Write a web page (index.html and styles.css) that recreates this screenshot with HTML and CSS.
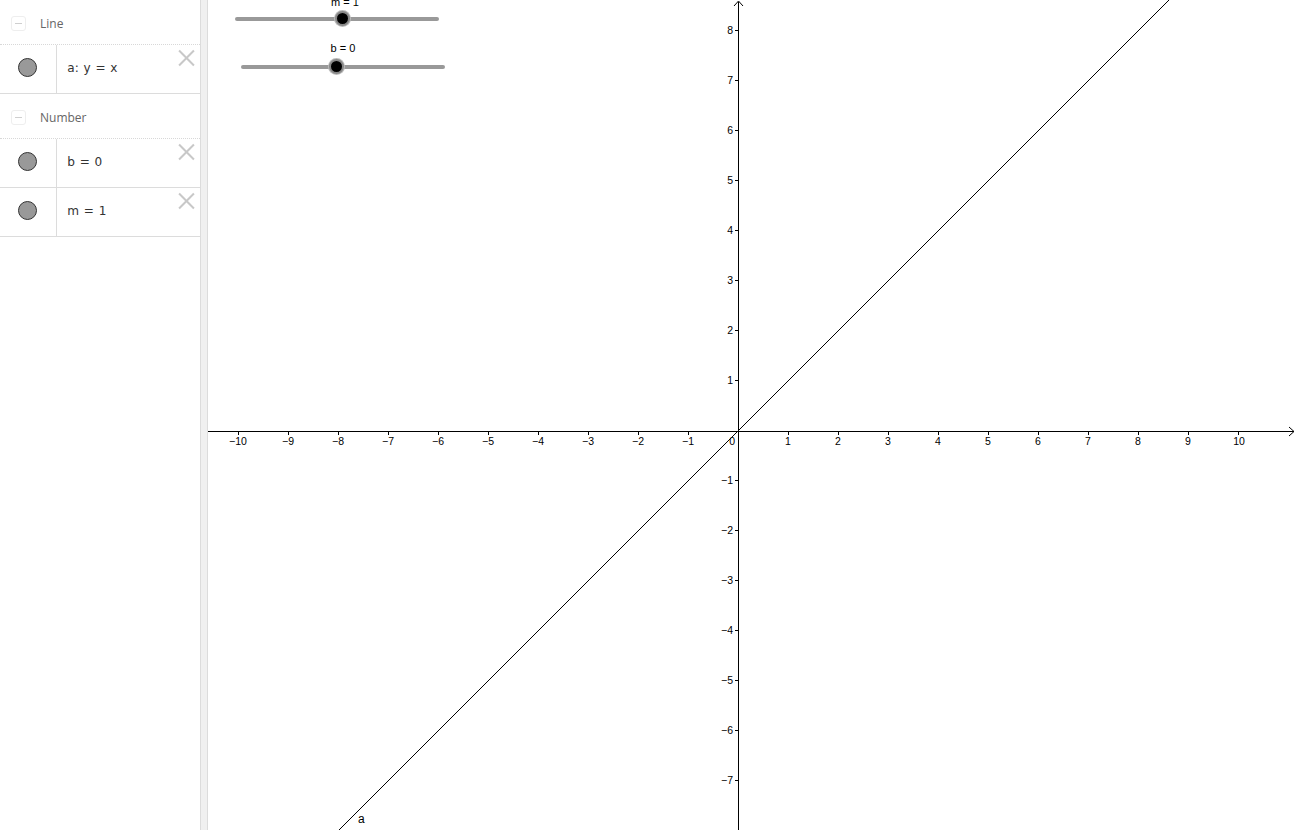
FILE: index.html
```html
<!DOCTYPE html>
<html>
<head>
<meta charset="utf-8">
<link rel="stylesheet" href="styles.css">
</head>
<body>
<div class="app">
  <div class="algebra">
    <div class="group">
      <div class="gh"><span class="toggle"><span class="dash"></span></span><span class="gname">Line</span></div>
      <div class="item">
        <div class="mark"><span class="dot"></span></div>
        <div class="expr">a: y = x</div>
        <span class="close"></span>
      </div>
    </div>
    <div class="group">
      <div class="gh"><span class="toggle"><span class="dash"></span></span><span class="gname">Number</span></div>
      <div class="item">
        <div class="mark"><span class="dot"></span></div>
        <div class="expr">b = 0</div>
        <span class="close"></span>
      </div>
      <div class="item">
        <div class="mark"><span class="dot"></span></div>
        <div class="expr">m = 1</div>
        <span class="close"></span>
      </div>
    </div>
  </div>
  <div class="splitter"></div>
  <div class="graphics">
    <svg class="plot" width="1088" height="830" viewBox="0 0 1088 830" xmlns="http://www.w3.org/2000/svg">
      <g stroke="#000" stroke-width="1" shape-rendering="crispEdges">
        <line x1="0" y1="431.5" x2="1086" y2="431.5"/>
        <line x1="530.5" y1="2" x2="530.5" y2="830"/>
      </g>
      <g stroke="#000" stroke-width="1" fill="none">
        <polyline points="1081,427 1086,431.5 1081,436"/>
        <polyline points="526,6 530.5,1 535,6"/>
      </g>
      <line x1="961" y1="0" x2="131" y2="830" stroke="#000" stroke-width="1"/>
      <g font-family="Liberation Sans, Arial, sans-serif" font-size="10.5" fill="#000">
        <text x="30" y="445" text-anchor="middle">−10</text>
        <text x="80" y="445" text-anchor="middle">−9</text>
        <text x="130" y="445" text-anchor="middle">−8</text>
        <text x="180" y="445" text-anchor="middle">−7</text>
        <text x="230" y="445" text-anchor="middle">−6</text>
        <text x="280" y="445" text-anchor="middle">−5</text>
        <text x="330" y="445" text-anchor="middle">−4</text>
        <text x="380" y="445" text-anchor="middle">−3</text>
        <text x="430" y="445" text-anchor="middle">−2</text>
        <text x="480" y="445" text-anchor="middle">−1</text>
        <text x="527" y="445" text-anchor="end">0</text>
        <text x="580" y="445" text-anchor="middle">1</text>
        <text x="630" y="445" text-anchor="middle">2</text>
        <text x="680" y="445" text-anchor="middle">3</text>
        <text x="730" y="445" text-anchor="middle">4</text>
        <text x="780" y="445" text-anchor="middle">5</text>
        <text x="830" y="445" text-anchor="middle">6</text>
        <text x="880" y="445" text-anchor="middle">7</text>
        <text x="930" y="445" text-anchor="middle">8</text>
        <text x="980" y="445" text-anchor="middle">9</text>
        <text x="1031" y="445" text-anchor="middle">10</text>
        <text x="525" y="34" text-anchor="end">8</text>
        <text x="525" y="84" text-anchor="end">7</text>
        <text x="525" y="134" text-anchor="end">6</text>
        <text x="525" y="184" text-anchor="end">5</text>
        <text x="525" y="234" text-anchor="end">4</text>
        <text x="525" y="284" text-anchor="end">3</text>
        <text x="525" y="334" text-anchor="end">2</text>
        <text x="525" y="384" text-anchor="end">1</text>
        <text x="525" y="484" text-anchor="end">−1</text>
        <text x="525" y="534" text-anchor="end">−2</text>
        <text x="525" y="584" text-anchor="end">−3</text>
        <text x="525" y="634" text-anchor="end">−4</text>
        <text x="525" y="684" text-anchor="end">−5</text>
        <text x="525" y="734" text-anchor="end">−6</text>
        <text x="525" y="784" text-anchor="end">−7</text>
        <text x="150" y="823" font-size="12">a</text>
      </g>
      <g stroke="#000" stroke-width="1" shape-rendering="crispEdges">
        <line x1="30.5" y1="431" x2="30.5" y2="435"/>
        <line x1="80.5" y1="431" x2="80.5" y2="435"/>
        <line x1="130.5" y1="431" x2="130.5" y2="435"/>
        <line x1="180.5" y1="431" x2="180.5" y2="435"/>
        <line x1="230.5" y1="431" x2="230.5" y2="435"/>
        <line x1="280.5" y1="431" x2="280.5" y2="435"/>
        <line x1="330.5" y1="431" x2="330.5" y2="435"/>
        <line x1="380.5" y1="431" x2="380.5" y2="435"/>
        <line x1="430.5" y1="431" x2="430.5" y2="435"/>
        <line x1="480.5" y1="431" x2="480.5" y2="435"/>
        <line x1="580.5" y1="431" x2="580.5" y2="435"/>
        <line x1="630.5" y1="431" x2="630.5" y2="435"/>
        <line x1="680.5" y1="431" x2="680.5" y2="435"/>
        <line x1="730.5" y1="431" x2="730.5" y2="435"/>
        <line x1="780.5" y1="431" x2="780.5" y2="435"/>
        <line x1="830.5" y1="431" x2="830.5" y2="435"/>
        <line x1="880.5" y1="431" x2="880.5" y2="435"/>
        <line x1="930.5" y1="431" x2="930.5" y2="435"/>
        <line x1="980.5" y1="431" x2="980.5" y2="435"/>
        <line x1="1030.5" y1="431" x2="1030.5" y2="435"/>
        <line x1="527" y1="30.5" x2="531" y2="30.5"/>
        <line x1="527" y1="80.5" x2="531" y2="80.5"/>
        <line x1="527" y1="130.5" x2="531" y2="130.5"/>
        <line x1="527" y1="180.5" x2="531" y2="180.5"/>
        <line x1="527" y1="230.5" x2="531" y2="230.5"/>
        <line x1="527" y1="280.5" x2="531" y2="280.5"/>
        <line x1="527" y1="330.5" x2="531" y2="330.5"/>
        <line x1="527" y1="380.5" x2="531" y2="380.5"/>
        <line x1="527" y1="480.5" x2="531" y2="480.5"/>
        <line x1="527" y1="530.5" x2="531" y2="530.5"/>
        <line x1="527" y1="580.5" x2="531" y2="580.5"/>
        <line x1="527" y1="630.5" x2="531" y2="630.5"/>
        <line x1="527" y1="680.5" x2="531" y2="680.5"/>
        <line x1="527" y1="730.5" x2="531" y2="730.5"/>
        <line x1="527" y1="780.5" x2="531" y2="780.5"/>
      </g>
    </svg>
    <div class="slider slider-m">
      <div class="slabel">m = 1</div>
      <div class="track"><span class="knob knob-m"></span></div>
    </div>
    <div class="slider slider-b">
      <div class="slabel">b = 0</div>
      <div class="track"><span class="knob knob-b"></span></div>
    </div>
  </div>
</div>
</body>
</html>
```
FILE: styles.css
```css
html, body {
  margin: 0;
  padding: 0;
  background: #fff;
  overflow: hidden;
}
.app {
  display: flex;
  width: 1296px;
  height: 830px;
  font-family: "Liberation Sans", Arial, sans-serif;
}
.algebra {
  width: 200px;
  flex: none;
  background: #fff;
}
.gh {
  height: 45px;
  padding-top: 2px;
  box-sizing: border-box;
  display: flex;
  align-items: center;
  border-bottom: 1px dotted #d8d8d8;
}
.toggle {
  width: 13px;
  height: 13px;
  margin-left: 11px;
  margin-right: 14px;
  border: 1px solid #eeeeee;
  border-radius: 3px;
  display: flex;
  align-items: center;
  justify-content: center;
}
.dash {
  width: 7px;
  height: 1px;
  background: #cfcfcf;
}
.gname {
  font-family: "Open Sans", sans-serif;
  font-size: 12px;
  color: #666;
}
.item {
  height: 48px;
  display: flex;
  position: relative;
  border-bottom: 1px solid #dcdcdc;
}
.mark {
  width: 57px;
  flex: none;
  border-right: 1px solid #dcdcdc;
  display: flex;
  align-items: center;
  justify-content: center;
  padding-bottom: 4px;
  padding-right: 1px;
  box-sizing: border-box;
}
.dot {
  width: 17px;
  height: 17px;
  border-radius: 50%;
  background: #999;
  border: 1px solid #333;
}
.expr {
  display: flex;
  align-items: center;
  padding-left: 11px;
  padding-bottom: 4px;
  font-family: "DejaVu Sans", sans-serif;
  font-size: 13px;
  word-spacing: 1px;
  color: #333;
  transform: scaleX(0.93);
  transform-origin: left center;
}
.close {
  position: absolute;
  right: 6px;
  top: 5px;
  width: 16px;
  height: 16px;
}
.close::before, .close::after {
  content: "";
  position: absolute;
  left: -2px;
  top: 7px;
  width: 21px;
  height: 2px;
  background: #c8c8c8;
  transform: rotate(45deg);
}
.close::after {
  transform: rotate(-45deg);
}
.splitter {
  width: 6px;
  flex: none;
  background: #f0f0f0;
  border-left: 1px solid #dcdcdc;
  border-right: 1px solid #dcdcdc;
}
.graphics {
  position: relative;
  flex: 1;
  height: 830px;
  overflow: hidden;
}
.plot {
  position: absolute;
  left: 0;
  top: 0;
}
.slider {
  position: absolute;
  width: 204px;
}
.slider-m { left: 27px; top: -5px; }
.slider-b { left: 33px; top: 41px; }
.slabel {
  text-align: center;
  font-size: 11px;
  color: #000;
  height: 14px;
  line-height: 14px;
  margin-bottom: 10px;
}
.slider-m .slabel { padding-left: 16px; margin-bottom: 8px; }
.slider-b .slabel { padding-left: 0px; }
.track {
  position: relative;
  height: 4px;
  border-radius: 2px;
  background: #999;
  width: 204px;
}
.knob {
  position: absolute;
  top: -6px;
  width: 11px;
  height: 11px;
  border-radius: 50%;
  background: #000;
  border: 2px solid #888;
  box-shadow: 0 0 0 1px #bbb;
  margin-left: -7px;
}
.knob-m { left: 107px; }
.knob-b { left: 95px; }
```
